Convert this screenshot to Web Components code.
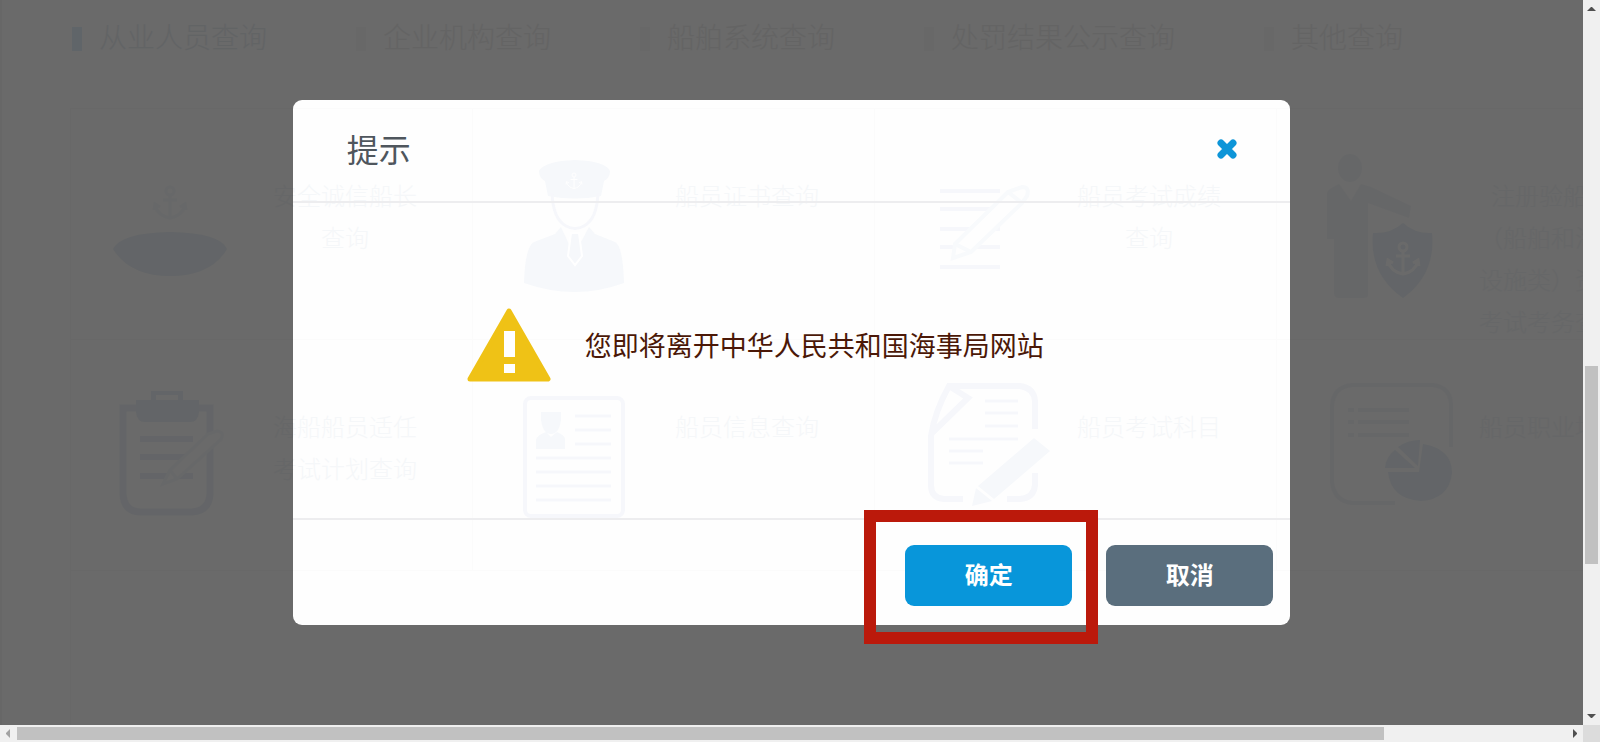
<!DOCTYPE html>
<html lang="zh-CN">
<head>
<meta charset="utf-8">
<title>海事局查询</title>
<style>
    html, body {
        margin: 0;
        height: 100%;
    }
    body {
        font-family: "Liberation Sans", "Noto Sans CJK SC", sans-serif;
        text-spacing-trim: space-all;
        overflow: hidden;
    }
</style>
</head>
<body>

<app-window>
    <query-page>
        <query-tab slot="tabs" active>从业人员查询</query-tab>
        <query-tab slot="tabs">企业机构查询</query-tab>
        <query-tab slot="tabs">船舶系统查询</query-tab>
        <query-tab slot="tabs">处罚结果公示查询</query-tab>
        <query-tab slot="tabs">其他查询</query-tab>

        <query-card icon="boat">安全诚信船长查询</query-card>
        <query-card icon="officer">船员证书查询</query-card>
        <query-card icon="paper">船员考试成绩查询</query-card>
        <query-card icon="shield">注册验船师<br>（船舶和海上设施类）资格考试考务查询</query-card>
        <query-card icon="clipboard">海船船员适任考试计划查询</query-card>
        <query-card icon="profile">船员信息查询</query-card>
        <query-card icon="edit">船员考试科目</query-card>
        <query-card icon="chart">船员职业培训</query-card>
    </query-page>
    <confirm-dialog>
        <span slot="title">提示</span>
        您即将离开中华人民共和国海事局网站
        <dialog-button slot="actions" kind="primary" marked>确定</dialog-button>
        <dialog-button slot="actions">取消</dialog-button>
    </confirm-dialog>
    <scroll-bar slot="right" direction="vertical"></scroll-bar>
    <scroll-bar slot="bottom" direction="horizontal"></scroll-bar>
</app-window>

<script>
const anchor = `
    <circle cx="0" cy="-12" r="4"/>
    <path d="M0 -8V14M-7 -3H7M-15 2Q-12 13 0 15Q12 13 15 2M-16 7L-15 1L-10 4M16 7L15 1L10 4"/>`;

const icons = {
    boat: `
        <path class="fill deep" d="M12 94Q20 78 69 77Q119 78 126 94Q110 121 69 121Q29 121 12 94Z"/>
        <g class="line faint" stroke-width="3" transform="translate(69 48)">${anchor}</g>`,
    officer: `
        <path class="fill" d="M36 16Q42 6 72 5Q102 6 107 16Q107 23 101 26L98 41Q72 46 45 41L42 26Q36 23 36 16Z"/>
        <g stroke="#fff" fill="none" stroke-width="2" transform="translate(71 26) scale(.5)">${anchor}</g>
        <path class="line" stroke-width="3" d="M49 38Q50 64 63 71Q72 76 81 71Q94 64 95 38"/>
        <path class="fill" d="M58 72L71 100L86 72L92 79L112 87Q120 91 121 128Q72 146 21 128Q22 92 31 87L52 79Z"/>
        <path class="fill" d="M68 78H76L79 101L72 110L65 101Z" stroke="#fff" stroke-width="2"/>`,
    paper: `
        <path class="line" stroke-width="4" d="M35 36H95M35 54H95M35 74H95M35 92H95M35 112H95"/>
        <path class="soft" stroke-width="4" d="M50 89L103 37L117 32Q125 32 122 41L117 48L66 97L48 103ZM50 89L66 97M103 37L117 48"/>`,
    shield: `
        <ellipse class="fill" cx="43" cy="13" rx="12" ry="14"/>
        <path class="fill" d="M32 29L44 46L54 29L64 32L104 51L102 63L61 48V140Q61 143 56 143H32Q27 143 27 138V84H20V38Q21 34 32 29Z"/>
        <path class="fill deep" d="M96 68Q108 79 125 78Q129 119 96 143Q62 119 66 78Q84 79 96 68Z"/>
        <g stroke="#fff" fill="none" stroke-width="3" transform="translate(96 104)">${anchor}</g>`,
    clipboard: `
        <path class="line deep" stroke-width="7" d="M36 22H22V108Q23 126 40 126H91Q108 125 109 108V22H98"/>
        <path class="fill deep" d="M35 14H50V5H82V14H98V26Q97 36 89 36H44Q36 36 35 26ZM55 9V14H77V9Z" fill-rule="evenodd"/>
        <path class="line deep" stroke-width="6" d="M39 53H92M39 71H92M39 90H92"/>
        <path class="soft" stroke-width="3" d="M69 84L107 48L116 45Q124 46 120 53L116 57L76 93L62 98ZM69 84L76 93"/>`,
    profile: `
        <rect class="line" stroke-width="4" x="22" y="12" width="98" height="118" rx="6"/>
        <path class="fill" d="M38 26H58V34Q56 48 48 48Q40 48 38 34ZM33 63V54Q34 49 43 46L48 51L54 46Q62 49 62 54V63Z"/>
        <path class="line" stroke-width="3" d="M72 30H108M72 44H108M72 58H108M33 72H108M33 86H108M33 100H108M33 114H108"/>`,
    edit: `
        <path class="line" stroke-width="6" d="M58 113H39Q26 112 26 99V50Q30 25 44 0H115Q129 2 130 15V43M130 87V99Q129 112 115 113H102M44 0L63 12L27 47"/>
        <path class="line" stroke-width="3" d="M80 15H113M80 27H113M80 40H113M44 53H113M44 65H78M44 77H78"/>
        <path class="fill" d="M129 52L145 65L89 113L73 100ZM71 102L87 115L67 120Z"/>`,
    chart: `
        <path class="line" stroke-width="4" d="M144 61V18Q143 1 126 -1H45Q26 1 25 20V96Q27 115 45 117H88"/>
        <path class="line" stroke-width="4" d="M41 24H47M51 24H102M41 36H47M51 36H102M41 49H47M51 49H102"/>
        <path class="fill deep" d="M116 58Q145 63 145 87Q142 113 114 115Q84 113 81 86H112Z"/>
        <path class="fill deep" d="M78 82Q79 71 88 64L108 82ZM91 61Q101 54 113 54L111 80Z"/>`
};

class AppWindow extends HTMLElement {
    constructor() {
        super();
        this.attachShadow({mode: 'open'});
    }

    connectedCallback() {
        this.shadowRoot.innerHTML = `
            <style>
                :host {
                    display: grid;
                    grid-template: minmax(0, 1fr) 17px / minmax(0, 1fr) 17px;
                    height: 100vh;
                }
                main {
                    position: relative;
                    overflow: hidden;
                    background: #fefefe;
                }
                .corner { background: #dcdcdc; }
            </style>
            <main><slot></slot></main>
            <slot name="right"></slot>
            <slot name="bottom"></slot>
            <div class="corner"></div>
        `;
    }
}

class QueryPage extends HTMLElement {
    constructor() {
        super();
        this.attachShadow({mode: 'open'});
    }

    connectedCallback() {
        this.shadowRoot.innerHTML = `
            <style>
                :host {
                    display: block;
                    min-height: 100%;
                    border-left: 2px solid #f8f8f8;
                }
                nav {
                    display: flex;
                    gap: 88px;
                    padding: 17px 0 0 70px;
                    height: 92px;
                    box-sizing: border-box;
                }
                .cards {
                    display: grid;
                    grid-template-columns: repeat(4, 402px);
                    grid-auto-rows: 231px;
                    width: max-content;
                    min-height: 640px;
                    align-content: start;
                    margin: 16px 0 0 68px;
                    border: 1px solid #fbfbfb;
                }
            </style>
            <nav><slot name="tabs"></slot></nav>
            <div class="cards"><slot></slot></div>
        `;
    }
}

class QueryTab extends HTMLElement {
    constructor() {
        super();
        this.attachShadow({mode: 'open'});
    }

    connectedCallback() {
        const active = this.hasAttribute('active');
        this.shadowRoot.innerHTML = `
            <style>
                :host { display: block; flex: none; }
                a {
                    display: flex;
                    align-items: center;
                    gap: 17px;
                    padding-right: 1px;
                    font-size: 28px;
                    font-weight: 300;
                    line-height: 44px;
                    color: ${active ? '#ecf0f4' : '#f0f0f0'};
                    text-decoration: none;
                    white-space: nowrap;
                }
                a::before {
                    content: "";
                    width: 10px;
                    height: 24px;
                    background: ${active ? '#e8f3fc' : '#fafafa'};
                }
            </style>
            <a href="#"><slot></slot></a>
        `;
    }
}

class QueryCard extends HTMLElement {
    constructor() {
        super();
        this.attachShadow({mode: 'open'});
    }

    connectedCallback() {
        this.shadowRoot.innerHTML = `
            <style>
                :host {
                    display: block;
                    box-sizing: border-box;
                    border: solid #fbfbfb;
                    border-width: 0 1px 1px 0;
                }
                a {
                    display: grid;
                    grid-template-columns: 140px 144px;
                    column-gap: 32px;
                    padding-left: 30px;
                    color: #f5f7f9;
                    text-decoration: none;
                }
                svg {
                    width: 140px;
                    height: 140px;
                    margin-top: 46px;
                    overflow: visible;
                }
                .fill { fill: #f6f8fb; }
                .line { fill: none; stroke: #f6f7fb; }
                .fill.deep { fill: #edf3f9; }
                .line.deep { stroke: #f0f4f9; }
                .faint { stroke: #f8fafc; }
                .soft { fill: #fefefe; stroke: #f8fafc; }
                span {
                    padding-top: 67px;
                    font-size: 24px;
                    font-weight: 300;
                    line-height: 42px;
                    text-align: center;
                }
            </style>
            <a href="#">
                <svg viewBox="0 0 140 140" aria-hidden="true">${icons[this.getAttribute('icon')]}</svg>
                <span><slot></slot></span>
            </a>
        `;
    }
}

class ConfirmDialog extends HTMLElement {
    constructor() {
        super();
        this.attachShadow({mode: 'open'});
    }

    connectedCallback() {
        // the dimmed backdrop is the shadow of the panel, the panel itself stays clear
        this.shadowRoot.innerHTML = `
            <style>
                :host {
                    display: block;
                    position: absolute;
                    inset: 0;
                    font-family: "Liberation Serif", "Noto Sans CJK SC", serif;
                }
                section {
                    width: 63%;
                    margin: 100px auto 0;
                    border-radius: 9px;
                    box-shadow: 0 0 0 100vmax rgba(0, 0, 0, .584);
                }
                header {
                    display: flex;
                    align-items: center;
                    justify-content: space-between;
                    height: 101px;
                    padding: 0 52px 0 54px;
                    border-bottom: 2px solid #ededef;
                }
                h2 {
                    margin: 0;
                    font-size: 32px;
                    font-weight: 400;
                    line-height: 48px;
                    color: #4f565d;
                }
                .close {
                    display: flex;
                    padding: 0 0 4px;
                    border: 0;
                    background: none;
                }
                .body {
                    display: flex;
                    align-items: flex-start;
                    gap: 34px;
                    min-height: 210px;
                    padding: 105px 0 0 174px;
                }
                p {
                    margin: 0;
                    padding-top: 19px;
                    font-size: 27px;
                    line-height: 40px;
                    color: #4b1807;
                }
                footer {
                    display: flex;
                    justify-content: flex-end;
                    gap: 34px;
                    padding: 25px 17px 19px;
                    border-top: 2px solid #ededef;
                }
            </style>
            <section role="dialog" aria-labelledby="title">
                <header>
                    <h2 id="title"><slot name="title"></slot></h2>
                    <button class="close" type="button" aria-label="关闭">
                        <svg width="22" height="22" viewBox="0 0 22 22">
                            <path d="M5 5L17 17M17 5L5 17" stroke="#0d95d8" stroke-width="7" stroke-linecap="round"/>
                        </svg>
                    </button>
                </header>
                <div class="body">
                    <svg width="84" height="74" viewBox="0 0 84 74" aria-hidden="true">
                        <path d="M42 3L81 71H3Z" fill="#efc216" stroke="#efc216" stroke-width="5" stroke-linejoin="round"/>
                        <path d="M37 23H48V49H37ZM37 56H48V65H37Z" fill="#fff"/>
                    </svg>
                    <p><slot></slot></p>
                </div>
                <footer><slot name="actions"></slot></footer>
            </section>
        `;
    }
}

class DialogButton extends HTMLElement {
    constructor() {
        super();
        this.attachShadow({mode: 'open'});
    }

    connectedCallback() {
        const primary = this.getAttribute('kind') === 'primary';
        this.shadowRoot.innerHTML = `
            <style>
                :host { display: block; position: relative; }
                button {
                    display: block;
                    width: 167px;
                    height: 61px;
                    padding: 0;
                    border: 0;
                    border-radius: 9px;
                    background: ${primary ? '#0896da' : '#5a6e7d'};
                    color: #fff;
                    font: bold 24px/36px "Liberation Serif", "Noto Sans CJK SC", serif;
                }
                .mark {
                    position: absolute;
                    inset: -35px -26px -38px -41px;
                    border: 12px solid #bb190b;
                    pointer-events: none;
                }
            </style>
            <button type="button"><slot></slot></button>
            ${this.hasAttribute('marked') ? '<div class="mark"></div>' : ''}
        `;
    }
}

class ScrollBar extends HTMLElement {
    constructor() {
        super();
        this.attachShadow({mode: 'open'});
    }

    connectedCallback() {
        const vertical = this.getAttribute('direction') === 'vertical';
        this.shadowRoot.innerHTML = `
            <style>
                :host {
                    display: flex;
                    flex-direction: ${vertical ? 'column' : 'row'};
                    background: #f0f0f0;
                }
                svg { flex: none; width: 17px; height: 17px; }
                .before { flex: ${vertical ? 349 : 0}; }
                .thumb {
                    flex: ${vertical ? 198 : 1367};
                    margin: ${vertical ? '0 2px' : '2px 0'};
                    background: #c1c1c1;
                }
                .after { flex: ${vertical ? 144 : 182}; }
            </style>
            <svg viewBox="0 0 17 17"><path fill="${vertical ? '#505050' : '#a3a3a3'}" d="${vertical ? 'M4 11L8 7H9L13 11Z' : 'M10 4L6 8V9L10 13Z'}"/></svg>
            <div class="before"></div>
            <div class="thumb"></div>
            <div class="after"></div>
            <svg viewBox="0 0 17 17"><path fill="#505050" d="${vertical ? 'M4 6L8 10H9L13 6Z' : 'M7 4L11 8V9L7 13Z'}"/></svg>
        `;
    }
}

customElements.define('app-window', AppWindow);
customElements.define('query-page', QueryPage);
customElements.define('query-tab', QueryTab);
customElements.define('query-card', QueryCard);
customElements.define('confirm-dialog', ConfirmDialog);
customElements.define('dialog-button', DialogButton);
customElements.define('scroll-bar', ScrollBar);
</script>
</body>
</html>
